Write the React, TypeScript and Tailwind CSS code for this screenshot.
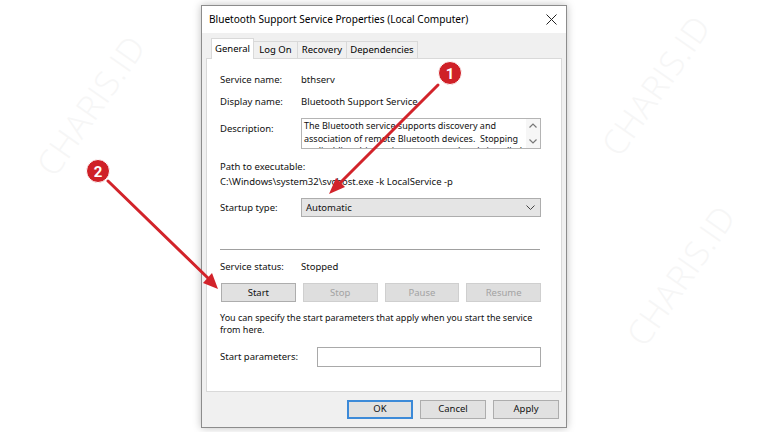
import React from "react";

const font = { fontFamily: '"Noto Sans", "Open Sans", sans-serif' };

function Btn({ label, disabled, primary, w }: { label: string; disabled?: boolean; primary?: boolean; w?: string }) {
  return (
    <div
      className={
        "flex h-[19px] items-center justify-center text-[9.5px] " +
        (w ?? "") +
        (primary
          ? " border-2 border-[#3c8ad8] bg-[#e1e1e1] text-[#111]"
          : disabled
          ? " border border-[#cfcfcf] bg-[#dedede] text-[#a3a3a3]"
          : " border border-[#adadad] bg-[#e1e1e1] text-[#111]")
      }
    >
      {label}
    </div>
  );
}

function Watermark({ cls }: { cls: string }) {
  return (
    <div className={"absolute text-[34px] font-light tracking-wide text-[#f6f6f6] " + cls} style={{ fontFamily: '"Open Sans", sans-serif' }}>
      CHARIS.ID
    </div>
  );
}

export default function App() {
  return (
    <div className="relative h-[432px] w-[768px] overflow-hidden bg-white" style={font}>
      <Watermark cls="left-[10px] top-[80px] -rotate-[55deg]" />
      <Watermark cls="left-[575px] top-[60px] -rotate-[55deg]" />
      <Watermark cls="left-[600px] top-[250px] -rotate-[55deg]" />

      <div className="relative mx-auto mt-[5px] flex h-[423px] w-[366px] flex-col border border-[#8c8c8c] bg-[#f0f0f0] shadow-[0_0_8px_rgba(0,0,0,0.25)]">
        {/* title bar */}
        <div className="flex h-[27px] items-center justify-between bg-white pl-[7px] pr-[9px]">
          <span className="text-[10.1px] text-black">Bluetooth Support Service Properties (Local Computer)</span>
          <svg width="11" height="11" viewBox="0 0 11 11">
            <path d="M0.5 0.5 L10.5 10.5 M10.5 0.5 L0.5 10.5" stroke="#222" strokeWidth="1" />
          </svg>
        </div>

        <div className="flex flex-1 flex-col px-[4px]">
          {/* tabs */}
          <div className="relative z-10 mt-[5px] flex h-[21px] items-end pl-[5px] text-[9.5px] text-black">
            <div className="flex h-[21px] w-[43px] items-center justify-center border border-b-0 border-[#d9d9d9] bg-white">General</div>
            <div className="flex h-[18px] w-[44px] items-center justify-center border border-l-0 border-[#d9d9d9] bg-[#f0f0f0]">Log On</div>
            <div className="flex h-[18px] w-[49px] items-center justify-center border border-l-0 border-[#d9d9d9] bg-[#f0f0f0]">Recovery</div>
            <div className="flex h-[18px] w-[71px] items-center justify-center border border-l-0 border-[#d9d9d9] bg-[#f0f0f0]">Dependencies</div>
          </div>

          {/* panel */}
          <div className="-mt-px flex h-[334px] flex-col whitespace-nowrap border border-[#d9d9d9] bg-white pl-[13px] pt-[14px] text-[9.5px] leading-[14px] text-[#111]">
            <div className="flex h-[14px]">
              <span className="w-[81px]">Service name:</span>
              <span>bthserv</span>
            </div>
            <div className="mt-[8px] flex h-[14px]">
              <span className="w-[81px]">Display name:</span>
              <span>Bluetooth Support Service</span>
            </div>
            <div className="mt-[9px] flex h-[31px]">
              <span className="w-[81px] pt-[4px]">Description:</span>
              <div className="flex h-[31px] w-[240px] border border-[#b4b4b4] bg-white">
                <div className="flex-1 overflow-hidden pl-[2px] pt-px text-[9px] leading-[12.5px]">
                  The Bluetooth service supports discovery and
                  <br />
                  association of remote Bluetooth devices.&nbsp; Stopping
                  <br />
                  or disabling this service may cause already installed
                </div>
                <div className="flex w-[14px] flex-col items-center justify-between bg-[#f6f6f6] py-[4px]">
                  <svg width="8" height="5" viewBox="0 0 8 5"><path d="M0.5 4.5 L4 1 L7.5 4.5" fill="none" stroke="#777" strokeWidth="1.2" /></svg>
                  <svg width="8" height="5" viewBox="0 0 8 5"><path d="M0.5 0.5 L4 4 L7.5 0.5" fill="none" stroke="#777" strokeWidth="1.2" /></svg>
                </div>
              </div>
            </div>
            <div className="mt-[11px] h-[14px]">Path to executable:</div>
            <div className="mt-px h-[14px]">C:\Windows\system32\svchost.exe -k LocalService -p</div>
            <div className="mt-[9px] flex h-[19px] items-center">
              <span className="w-[81px]">Startup type:</span>
              <div className="flex h-[19px] w-[240px] items-center justify-between border border-[#adadad] bg-[#e5e5e5] pl-[4px] pr-[5px]">
                <span>Automatic</span>
                <svg width="9" height="5" viewBox="0 0 9 5"><path d="M0.5 0.5 L4.5 4.5 L8.5 0.5" fill="none" stroke="#444" strokeWidth="1" /></svg>
              </div>
            </div>
            <div className="mt-[32px] h-px w-[320px] bg-[#a0a0a0]" />
            <div className="mt-[10px] flex h-[14px]">
              <span className="w-[81px]">Service status:</span>
              <span>Stopped</span>
            </div>
            <div className="ml-px mt-[9px] grid w-[320px] grid-cols-4 gap-[7px]">
              <Btn label="Start" />
              <Btn label="Stop" disabled />
              <Btn label="Pause" disabled />
              <Btn label="Resume" disabled />
            </div>
            <div className="mt-[10px] text-[9px] leading-[12px]">
              You can specify the start parameters that apply when you start the service
              <br />
              from here.
            </div>
            <div className="mt-[11px] flex h-[20px] items-center">
              <span className="w-[97px]">Start parameters:</span>
              <div className="h-[20px] w-[224px] border border-[#a9a9a9] bg-white" />
            </div>
          </div>

          {/* bottom buttons */}
          <div className="mt-[8px] flex justify-end gap-[7px] pr-[3px]">
            <Btn label="OK" primary w="w-[66px]" />
            <Btn label="Cancel" w="w-[66px]" />
            <Btn label="Apply" w="w-[66px]" />
          </div>
        </div>
      </div>

      {/* annotations */}
      <svg className="pointer-events-none absolute left-0 top-0" width="768" height="432" viewBox="0 0 768 432">
        <line x1="438" y1="85" x2="338" y2="185" stroke="#d2232a" strokeWidth="3" strokeLinecap="round" />
        <polygon points="329,194 345,187 336,178" fill="#d2232a" />
        <line x1="108" y1="181" x2="210" y2="280" stroke="#d2232a" strokeWidth="3" strokeLinecap="round" />
        <polygon points="218,289 203,283 212,273" fill="#d2232a" />
        <circle cx="450" cy="73" r="11.5" fill="#cf2027" stroke="#ffffff" strokeWidth="1" />
        <text x="450" y="78.5" textAnchor="middle" fontSize="15" fontWeight="700" fill="#fff" fontFamily="Roboto, sans-serif">1</text>
        <circle cx="98" cy="171" r="11.5" fill="#cf2027" stroke="#ffffff" strokeWidth="1" />
        <text x="98" y="176.5" textAnchor="middle" fontSize="15" fontWeight="700" fill="#fff" fontFamily="Roboto, sans-serif">2</text>
      </svg>
    </div>
  );
}
